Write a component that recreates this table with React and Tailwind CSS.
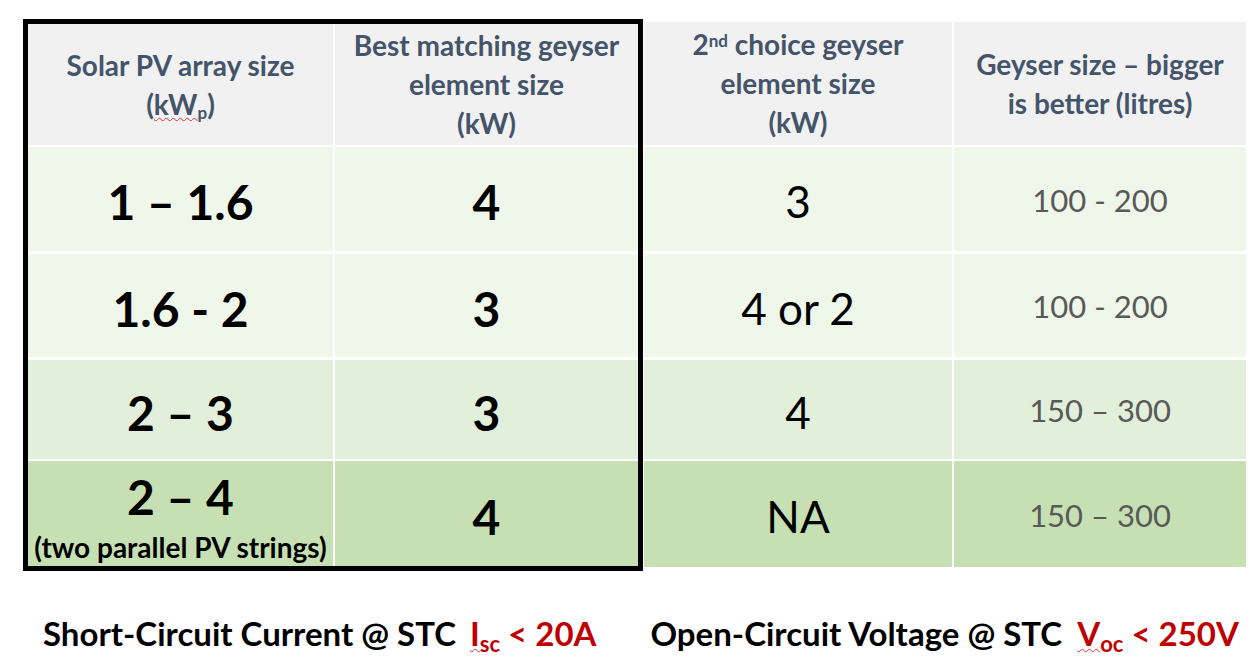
import React from 'react';

const FONT = { fontFamily: 'Lato, "Open Sans", sans-serif' };

const rows = [
  { size: '1 – 1.6', best: '4', second: '3', litres: '100 - 200', bg: 'bg-[#eff6ea]', h: 'h-[104px]' },
  { size: '1.6 - 2', best: '3', second: '4 or 2', litres: '100 - 200', bg: 'bg-[#eff6ea]', h: 'h-[103px]' },
  { size: '2 – 3', best: '3', second: '4', litres: '150 – 300', bg: 'bg-[#e2efda]', h: 'h-[99px]' },
  { size: '2 – 4', note: '(two parallel PV strings)', best: '4', second: 'NA', litres: '150 – 300', bg: 'bg-[#c6e0b4]', h: 'h-[105px]' },
];

const Wavy = ({ children }) => (
  <span className="underline decoration-wavy decoration-[#e03030] decoration-1 underline-offset-2">{children}</span>
);

function HeaderCell({ children, w }) {
  return (
    <div className={`${w} bg-[#f1f1f1] flex items-center justify-center text-center text-[28px] leading-[39px] font-bold text-[#44546a]`}>
      <div>{children}</div>
    </div>
  );
}

export default function App() {
  return (
    <div className="w-[1258px] h-[669px] bg-white overflow-hidden" style={FONT}>
      <div className="flex pt-[19px] pl-[23px]">
        {/* Boxed columns */}
        <div className="border-[5px] border-black flex flex-col gap-y-[2px] bg-white">
          <div className="flex gap-x-[2px] h-[121px]">
            <HeaderCell w="w-[305px]">
              Solar PV array size<br />
              (<Wavy>kW<sub className="text-[17px]">p</sub></Wavy>)
            </HeaderCell>
            <HeaderCell w="w-[303px]">
              Best matching geyser<br />element size<br />(kW)
            </HeaderCell>
          </div>
          {rows.map((r, i) => (
            <div key={r.size} className={`flex gap-x-[2px] ${r.h} ${i === 1 || i === 2 ? 'mt-[1px]' : ''}`}>
              <div className={`w-[305px] ${r.bg} flex flex-col items-center justify-center text-black font-bold`}>
                <span className="text-[48px] leading-none mt-[6px]">{r.size}</span>
                {r.note && <span className="text-[28px] leading-none mt-[12px] whitespace-nowrap">{r.note}</span>}
              </div>
              <div className={`w-[303px] ${r.bg} flex items-center justify-center text-black font-bold text-[48px] leading-none`}>
                <span className="mt-[6px]">{r.best}</span>
              </div>
            </div>
          ))}
        </div>

        {/* Open columns */}
        <div className="ml-[1px] mt-[3px] flex flex-col gap-y-[2px]">
          <div className="flex gap-x-[2px] h-[123px]">
            <HeaderCell w="w-[308px]">
              2<sup className="text-[17px]">nd</sup> choice geyser<br />element size<br />(kW)
            </HeaderCell>
            <HeaderCell w="w-[292px]">
              Geyser size – bigger<br />is better (litres)
            </HeaderCell>
          </div>
          {rows.map((r, i) => (
            <div key={r.size} className={`flex gap-x-[2px] ${i === 3 ? 'h-[106px]' : r.h} ${i === 1 || i === 2 ? 'mt-[1px]' : ''}`}>
              <div className={`w-[308px] ${r.bg} flex items-center justify-center text-black text-[44px] leading-none`}>
                <span className="mt-[4px]">{r.second}</span>
              </div>
              <div className={`w-[292px] ${r.bg} flex items-center justify-center text-[#595959] text-[31px] leading-none`}>
                <span className="mt-[2px]">{r.litres}</span>
              </div>
            </div>
          ))}
        </div>
      </div>

      {/* Footnote */}
      <div className="flex items-baseline mt-[46px] pl-[43px] text-[33px] font-bold text-black leading-none whitespace-nowrap">
        <span>Short-Circuit Current @ STC</span>
        <span className="ml-[14px] text-[#c00000]">
          <Wavy>I<sub className="text-[22px]">sc</sub></Wavy> &lt; 20A
        </span>
        <span className="ml-[54px]">Open-Circuit Voltage @ STC</span>
        <span className="ml-[15px] text-[#c00000]">
          <Wavy>V<sub className="text-[22px]">oc</sub></Wavy> &lt; 250V
        </span>
      </div>
    </div>
  );
}
